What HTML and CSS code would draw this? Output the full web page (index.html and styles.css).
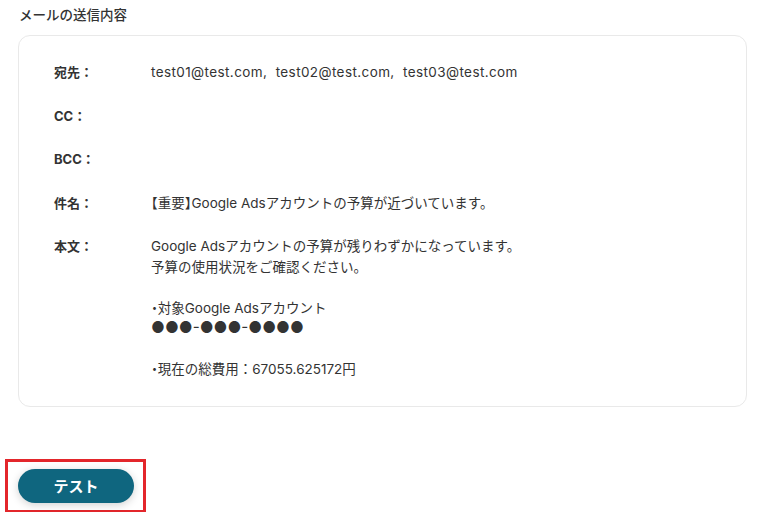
FILE: index.html
```html
<!DOCTYPE html>
<html lang="ja">
<head>
<meta charset="utf-8">
<link rel="stylesheet" href="styles.css">
</head>
<body>
<div class="page">
  <h2 class="title">メールの送信内容</h2>
  <div class="card">
    <div class="row"><div class="label">宛先：</div><div class="value emails">test01@test.com,&nbsp; test02@test.com,&nbsp; test03@test.com</div></div>
    <div class="row"><div class="label">CC：</div><div class="value"></div></div>
    <div class="row"><div class="label">BCC：</div><div class="value"></div></div>
    <div class="row"><div class="label">件名：</div><div class="value"><span class="h">【</span>重要<span class="h">】</span>Google Adsアカウントの予算が近づいています。</div></div>
    <div class="row"><div class="label">本文：</div><div class="value">
      <p>Google Adsアカウントの予算が残りわずかになっています。<br>予算の使用状況をご確認ください。</p>
      <p><span class="h">・</span>対象Google Adsアカウント<br><span class="mask">●●●-●●●-●●●●</span></p>
      <p><span class="h">・</span>現在の総費用：67055.625172円</p>
    </div></div>
  </div>
  <div class="actions">
    <div class="highlight"><button class="btn">テスト</button></div>
  </div>
</div>
</body>
</html>
```
FILE: styles.css
```css
html, body { margin: 0; padding: 0; background: #fff; }
body {
  font-family: "Inter", "Noto Sans CJK JP", sans-serif;
  color: #333;
  font-size: 13px;
  overflow: hidden;
}
.page { padding: 5px 0 0 0; }
.title {
  margin: 0 0 10px 19px;
  font-size: 13.5px;
  line-height: 20px;
  font-weight: 500;
  color: #333;
}
.card {
  margin-left: 18px;
  width: 729px;
  box-sizing: border-box;
  border: 1px solid #e9e9e9;
  border-radius: 12px;
  padding: 26px 20px 26px 35px;
  display: flex;
  flex-direction: column;
  gap: 23px;
}
.row {
  display: grid;
  grid-template-columns: 97px 1fr;
  line-height: 20.5px;
  min-height: 20.5px;
}
.label { font-weight: 700; color: #333; }
.value {
  color: #333;
  font-size: 13.5px;
}
.h { font-feature-settings: "halt"; }
.emails { letter-spacing: 0.4px; }
.value p { margin: 0 0 20.5px 0; }
.value p:last-child { margin-bottom: 0; }
.mask { font-size: 15.2px; letter-spacing: 0; }
.actions { padding: 52px 0 0 5px; }
.highlight {
  display: inline-block;
  border: 3px solid #e3262b;
  padding: 7px 9px 7px 10px;
}
.btn {
  display: block;
  width: 116px;
  height: 34px;
  border: none;
  border-radius: 17px;
  background: #0f667f;
  color: #fff;
  font-family: "Inter", "Noto Sans CJK JP", sans-serif;
  font-size: 15px;
  font-weight: 700;
  box-shadow: 0 2px 8px rgba(0,0,0,0.18);
}
```
